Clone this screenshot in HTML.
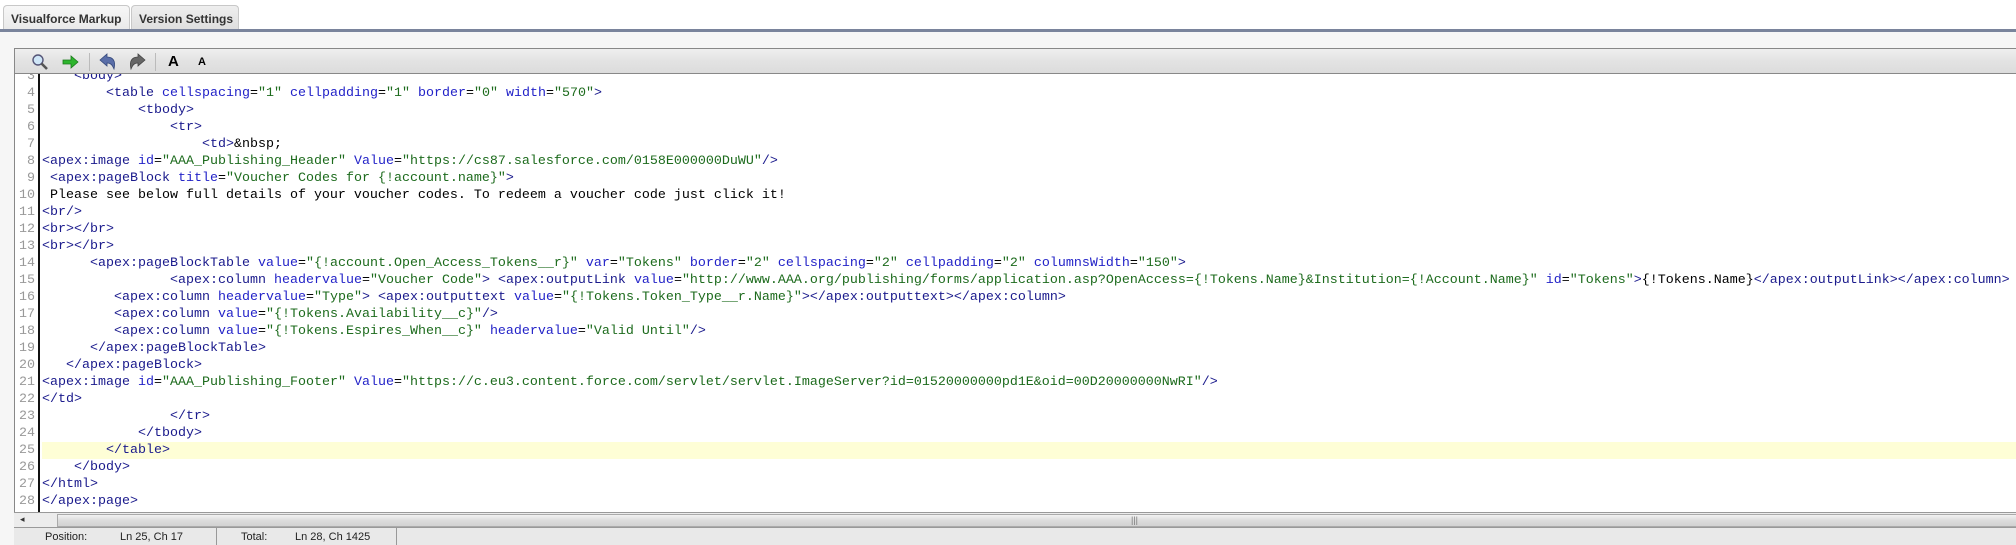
<!DOCTYPE html>
<html><head><meta charset="utf-8"><style>
*{margin:0;padding:0;box-sizing:border-box}
body{width:2016px;height:545px;overflow:hidden;background:#fff;position:relative;font-family:"Liberation Sans",Arial,sans-serif}
.tab{position:absolute;top:5px;height:25px;border:1px solid #c8c8c8;border-bottom:none;border-radius:4px 4px 0 0;font-weight:bold;font-size:12px;color:#333;padding:6px 0 0 7px}
#bar{position:absolute;left:0;top:29px;width:2016px;height:3px;background:#7a849c}
#under{position:absolute;left:0;top:32px;width:2016px;height:513px;background:#f6f6f6}
#tb{position:absolute;left:14px;top:48px;width:2002px;height:26px;border:1px solid #888;border-right:none;background:linear-gradient(#efefef,#e3e3e3 50%,#dcdcdc)}
#code{position:absolute;left:14px;top:74px;width:2002px;height:438px;background:#fff;border-left:1px solid #888;overflow:hidden}
#gut{position:absolute;left:0;top:0;width:25px;height:438px;border-right:2px solid #111}
.ln{position:absolute;left:0;height:17px;width:2002px;font-family:"Liberation Mono","Courier New",monospace;font-size:13.33px;line-height:17px;white-space:pre;color:#000}
.ln .n{position:absolute;left:0;width:20px;text-align:right;color:#999}
.ln .c{position:absolute;left:27px}
.t{color:#1a1a8c}.a{color:#2323c8}.v{color:#1d6b1d}
#sb{position:absolute;left:14px;top:512px;width:2002px;height:16px;background:#ececec;border-top:1px solid #999;border-bottom:1px solid #999}
#thumb{position:absolute;left:43px;top:1px;right:0;height:13px;border:1px solid #aaa;border-right:none;background:linear-gradient(#f2f2f2,#dcdcdc 50%,#d2d2d2)}
#st{position:absolute;left:14px;top:528px;width:2002px;height:17px;background:#e9e9e9;font-size:11px;color:#222}
#st span{position:absolute;top:3px}
.sep{position:absolute;top:0;width:1px;height:17px;background:#999}
.tsep{position:absolute;top:4px;width:1px;height:18px;background:#bbb}
</style></head><body>
<div class="tab" style="left:3px;width:127px;background:linear-gradient(#f7f7f7,#e8e8e8);height:27px">Visualforce Markup</div>
<div class="tab" style="left:131px;width:108px;background:linear-gradient(#eee,#dedede)">Version Settings</div>
<div id="bar"></div>
<div id="under"></div>
<div id="tb">
<svg style="position:absolute;left:16px;top:4px" width="18" height="18" viewBox="0 0 18 18"><circle cx="7" cy="7" r="5" fill="#cfe6f7" stroke="#557" stroke-width="1.4"/><path d="M10.5 10.5 L16 16" stroke="#555" stroke-width="2.6"/></svg>
<svg style="position:absolute;left:47px;top:5px" width="18" height="16" viewBox="0 0 18 16"><path d="M1 6h8V2l7 6-7 6v-4H1z" fill="#2db52d" stroke="#1a7a1a" stroke-width="0.8"/></svg>
<div class="tsep" style="left:74px"></div>
<svg style="position:absolute;left:84px;top:4px" width="18" height="18" viewBox="0 0 18 18"><path d="M1 7 L8 1 V4 C14 4 17 8 15 16 C13 11 11 10 8 10 V13 Z" fill="#5a6ea8" stroke="#34487a" stroke-width="0.8"/></svg>
<svg style="position:absolute;left:113px;top:4px" width="18" height="18" viewBox="0 0 18 18"><path d="M17 7 L10 1 V4 C4 4 1 8 3 16 C5 11 7 10 10 10 V13 Z" fill="#666" stroke="#444" stroke-width="0.8"/></svg>
<div class="tsep" style="left:140px"></div>
<span style="position:absolute;left:153px;top:4px;font-weight:bold;font-size:15px">A</span>
<span style="position:absolute;left:183px;top:7px;font-weight:bold;font-size:11px">A</span>
</div>
<div id="code">
<div id="gut"></div>
<div style="position:absolute;left:0;top:-6px">
<div class="ln" style="top:0"><span class="n">3</span><span class="c" style="left:59px"><span class="t">&lt;body&gt;</span></span></div>
<div class="ln" style="top:17px"><span class="n">4</span><span class="c" style="left:91px"><span class="t">&lt;table</span> <span class="a">cellspacing</span>=<span class="v">"1"</span> <span class="a">cellpadding</span>=<span class="v">"1"</span> <span class="a">border</span>=<span class="v">"0"</span> <span class="a">width</span>=<span class="v">"570"</span><span class="t">&gt;</span></span></div>
<div class="ln" style="top:34px"><span class="n">5</span><span class="c" style="left:123px"><span class="t">&lt;tbody&gt;</span></span></div>
<div class="ln" style="top:51px"><span class="n">6</span><span class="c" style="left:155px"><span class="t">&lt;tr&gt;</span></span></div>
<div class="ln" style="top:68px"><span class="n">7</span><span class="c" style="left:187px"><span class="t">&lt;td&gt;</span>&amp;nbsp;</span></div>
<div class="ln" style="top:85px"><span class="n">8</span><span class="c"><span class="t">&lt;apex:image</span> <span class="a">id</span>=<span class="v">"AAA_Publishing_Header"</span> <span class="a">Value</span>=<span class="v">"https://cs87.salesforce.com/0158E000000DuWU"</span><span class="t">/&gt;</span></span></div>
<div class="ln" style="top:102px"><span class="n">9</span><span class="c"> <span class="t">&lt;apex:pageBlock</span> <span class="a">title</span>=<span class="v">"Voucher Codes for {!account.name}"</span><span class="t">&gt;</span></span></div>
<div class="ln" style="top:119px"><span class="n">10</span><span class="c"> Please see below full details of your voucher codes. To redeem a voucher code just click it!</span></div>
<div class="ln" style="top:136px"><span class="n">11</span><span class="c"><span class="t">&lt;br/&gt;</span></span></div>
<div class="ln" style="top:153px"><span class="n">12</span><span class="c"><span class="t">&lt;br&gt;&lt;/br&gt;</span></span></div>
<div class="ln" style="top:170px"><span class="n">13</span><span class="c"><span class="t">&lt;br&gt;&lt;/br&gt;</span></span></div>
<div class="ln" style="top:187px"><span class="n">14</span><span class="c" style="left:75px"><span class="t">&lt;apex:pageBlockTable</span> <span class="a">value</span>=<span class="v">"{!account.Open_Access_Tokens__r}"</span> <span class="a">var</span>=<span class="v">"Tokens"</span> <span class="a">border</span>=<span class="v">"2"</span> <span class="a">cellspacing</span>=<span class="v">"2"</span> <span class="a">cellpadding</span>=<span class="v">"2"</span> <span class="a">columnsWidth</span>=<span class="v">"150"</span><span class="t">&gt;</span></span></div>
<div class="ln" style="top:204px"><span class="n">15</span><span class="c" style="left:155px"><span class="t">&lt;apex:column</span> <span class="a">headervalue</span>=<span class="v">"Voucher Code"</span><span class="t">&gt;</span> <span class="t">&lt;apex:outputLink</span> <span class="a">value</span>=<span class="v">"http://www.AAA.org/publishing/forms/application.asp?OpenAccess={!Tokens.Name}&amp;Institution={!Account.Name}"</span> <span class="a">id</span>=<span class="v">"Tokens"</span><span class="t">&gt;</span>{!Tokens.Name}<span class="t">&lt;/apex:outputLink&gt;&lt;/apex:column&gt;</span></span></div>
<div class="ln" style="top:221px"><span class="n">16</span><span class="c" style="left:99px"><span class="t">&lt;apex:column</span> <span class="a">headervalue</span>=<span class="v">"Type"</span><span class="t">&gt;</span> <span class="t">&lt;apex:outputtext</span> <span class="a">value</span>=<span class="v">"{!Tokens.Token_Type__r.Name}"</span><span class="t">&gt;&lt;/apex:outputtext&gt;&lt;/apex:column&gt;</span></span></div>
<div class="ln" style="top:238px"><span class="n">17</span><span class="c" style="left:99px"><span class="t">&lt;apex:column</span> <span class="a">value</span>=<span class="v">"{!Tokens.Availability__c}"</span><span class="t">/&gt;</span></span></div>
<div class="ln" style="top:255px"><span class="n">18</span><span class="c" style="left:99px"><span class="t">&lt;apex:column</span> <span class="a">value</span>=<span class="v">"{!Tokens.Espires_When__c}"</span> <span class="a">headervalue</span>=<span class="v">"Valid Until"</span><span class="t">/&gt;</span></span></div>
<div class="ln" style="top:272px"><span class="n">19</span><span class="c" style="left:75px"><span class="t">&lt;/apex:pageBlockTable&gt;</span></span></div>
<div class="ln" style="top:289px"><span class="n">20</span><span class="c" style="left:51px"><span class="t">&lt;/apex:pageBlock&gt;</span></span></div>
<div class="ln" style="top:306px"><span class="n">21</span><span class="c"><span class="t">&lt;apex:image</span> <span class="a">id</span>=<span class="v">"AAA_Publishing_Footer"</span> <span class="a">Value</span>=<span class="v">"https://c.eu3.content.force.com/servlet/servlet.ImageServer?id=01520000000pd1E&amp;oid=00D20000000NwRI"</span><span class="t">/&gt;</span></span></div>
<div class="ln" style="top:323px"><span class="n">22</span><span class="c"><span class="t">&lt;/td&gt;</span></span></div>
<div class="ln" style="top:340px"><span class="n">23</span><span class="c" style="left:155px"><span class="t">&lt;/tr&gt;</span></span></div>
<div class="ln" style="top:357px"><span class="n">24</span><span class="c" style="left:123px"><span class="t">&lt;/tbody&gt;</span></span></div>
<div class="ln" style="top:374px"><div style="position:absolute;left:27px;right:0;top:0;height:17px;background:#fefed6"></div><span class="n">25</span><span class="c" style="left:91px"><span class="t">&lt;/table&gt;</span></span></div>
<div class="ln" style="top:391px"><span class="n">26</span><span class="c" style="left:59px"><span class="t">&lt;/body&gt;</span></span></div>
<div class="ln" style="top:408px"><span class="n">27</span><span class="c"><span class="t">&lt;/html&gt;</span></span></div>
<div class="ln" style="top:425px"><span class="n">28</span><span class="c"><span class="t">&lt;/apex:page&gt;</span></span></div>
</div>
</div>
<div id="sb"><span style="position:absolute;left:6px;top:1px;font-size:9px;color:#333">◂</span><div id="thumb"><span style="position:absolute;left:1073px;top:0;font-size:9px;color:#777">|||</span></div></div>
<div id="st"><span style="left:31px">Position:</span><span style="left:106px">Ln 25, Ch 17</span><div class="sep" style="left:202px"></div><span style="left:227px">Total:</span><span style="left:281px">Ln 28, Ch 1425</span><div class="sep" style="left:382px"></div></div>
</body></html>
